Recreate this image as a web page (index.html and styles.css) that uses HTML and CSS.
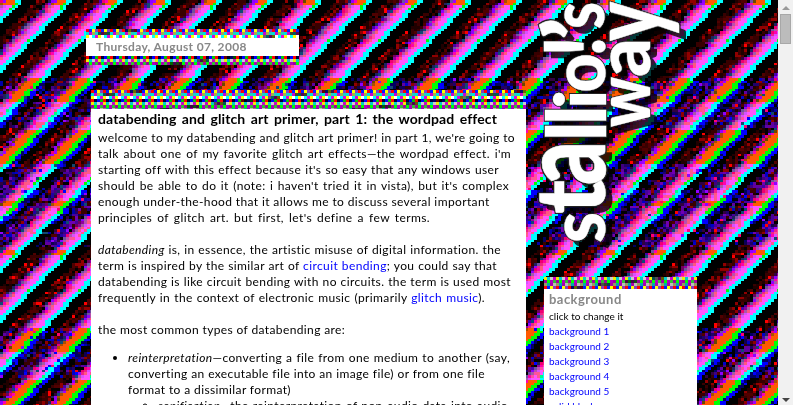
FILE: index.html
```html
<!DOCTYPE html>
<html lang="en">
<head>
<meta charset="utf-8">
<title>stallio!'s way</title>
<link rel="stylesheet" href="styles.css">
</head>
<body>
<canvas id="backdrop" class="backdrop" width="778" height="405"></canvas>
<div class="page">
  <div class="topline"></div>
  <main class="main">
    <section class="date">
      <canvas class="strip" width="213" height="9" data-start="0"></canvas>
      <h2>Thursday, August 07, 2008</h2>
      <canvas class="strip" width="213" height="9" data-start="3"></canvas>
    </section>
    <article class="post">
      <canvas class="strip" width="435" height="19" data-start="0"></canvas>
      <div class="post-body">
        <h3><span style="--w:399px">databending and glitch art primer, part 1: the wordpad effect</span></h3>
        <p>
          <span style="--w:417px">welcome to my databending and glitch art primer! in part 1, we're going to</span>
          <span style="--w:413px">talk about one of my favorite glitch art effects—the wordpad effect. i'm</span>
          <span style="--w:401px">starting off with this effect because it's so easy that any windows user</span>
          <span style="--w:411px">should be able to do it (note: i haven't tried it in vista), but it's complex</span>
          <span style="--w:388px">enough under-the-hood that it allows me to discuss several important</span>
          <span style="--w:332px">principles of glitch art. but first, let's define a few terms.</span>
        </p>
        <p>
          <span style="--w:403px"><i>databending</i> is, in essence, the artistic misuse of digital information. the</span>
          <span style="--w:399px">term is inspired by the similar art of <a href="#">circuit bending</a>; you could say that</span>
          <span style="--w:413px">databending is like circuit bending with no circuits. the term is used most</span>
          <span style="--w:387px">frequently in the context of electronic music (primarily <a href="#">glitch music</a>).</span>
        </p>
        <p><span style="--w:246px">the most common types of databending are:</span></p>
        <ul>
          <li>
            <span style="--w:382px"><i>reinterpretation</i>—converting a file from one medium to another (say,</span>
            <span style="--w:357px">converting an executable file into an image file) or from one file</span>
            <span style="--w:160px">format to a dissimilar format)</span>
            <ul><li><span style="--w:350px"><i>sonification</i>—the reinterpretation of non-audio data into audio</span></li></ul>
          </li>
        </ul>
      </div>
    </article>
  </main>
  <aside class="side">
    <svg class="logo" width="160" height="250" viewBox="534 0 160 250" role="img" aria-label="stallio!'s way">
      <defs>
        <g id="name">
          <text transform="translate(605 243) rotate(-90) scale(1 .88)" textLength="31" lengthAdjust="spacingAndGlyphs">s</text>
          <text transform="translate(605 214) rotate(-90) scale(1 1.1)" textLength="34" lengthAdjust="spacingAndGlyphs">t</text>
          <text transform="translate(605 185) rotate(-90) scale(1 1.36)" textLength="44" lengthAdjust="spacingAndGlyphs">a</text>
          <text transform="translate(605.5 141) rotate(-90) scale(1 .94)" textLength="19.5" lengthAdjust="spacingAndGlyphs">l</text>
          <text transform="translate(605.5 125) rotate(-90) scale(1 .94)" textLength="19.5" lengthAdjust="spacingAndGlyphs">l</text>
          <text transform="translate(605.5 109) rotate(-90) scale(1 .8)" textLength="19.5" lengthAdjust="spacingAndGlyphs">i</text>
          <text transform="translate(605 92.5) rotate(-90) scale(1 .85)" textLength="39" lengthAdjust="spacingAndGlyphs">o</text>
          <text transform="translate(605 57) rotate(-90) scale(1 .96)" textLength="21" lengthAdjust="spacingAndGlyphs">!</text>
          <text transform="translate(607 41) rotate(-90)" textLength="24" lengthAdjust="spacingAndGlyphs">’</text>
          <text transform="translate(604 29) rotate(-90) scale(1 .87)" textLength="27" lengthAdjust="spacingAndGlyphs">s</text>
          <text transform="translate(650 127) rotate(-90) scale(1 .87)" textLength="50" lengthAdjust="spacingAndGlyphs">w</text>
          <text transform="translate(650 77) rotate(-90) scale(1 .86)" textLength="39" lengthAdjust="spacingAndGlyphs">a</text>
          <text transform="translate(662 41) rotate(-90) scale(1 1.15)" textLength="39" lengthAdjust="spacingAndGlyphs">y</text>
        </g>
      </defs>
      <use href="#name" class="logo-shadow" x="7" y="7"/>
      <use href="#name" class="logo-edge"/>
      <use href="#name" class="logo-face"/>
    </svg>
    <section class="box">
      <canvas class="strip" width="153" height="12" data-start="4"></canvas>
      <div class="box-body">
        <h4>background</h4>
        <p>click to change it</p>
        <a href="#">background 1</a>
        <a href="#">background 2</a>
        <a href="#">background 3</a>
        <a href="#">background 4</a>
        <a href="#">background 5</a>
        <a href="#">solid black</a>
      </div>
    </section>
  </aside>
  <div class="scrollbar"><i class="up"></i><b class="thumb"></b><i class="down"></i></div>
</div>
<script src="backdrop.js"></script>
</body>
</html>
```
FILE: styles.css
```css
* { box-sizing: border-box; }
body { margin: 0; height: 405px; overflow: hidden; background: #000; font: 12px/16px Lato, "Open Sans", sans-serif; color: #000; }
canvas, svg { display: block; }
.backdrop { position: absolute; left: 0; top: 0; z-index: -1; }
.page { display: grid; grid-template-columns: 80px 454px 244px 15px; grid-template-rows: 1px 404px; height: 405px; overflow: hidden; }
.topline { grid-column: 2 / 4; width: 457px; background: #fff; }
.main { grid-column: 2; grid-row: 2; padding: 28px 0 0 6px; }
.date { width: 213px; }
.date h2 { margin: 0; height: 18px; padding-left: 10px; background: #fff; color: #888; font: bold 12px/18px Lato, sans-serif; letter-spacing: .33px; white-space: nowrap; }
.post { margin: 25px 0 0 5px; width: 435px; }
.post-body { height: 400px; padding: 1px 0 0 7px; background: #fff; }
.post-body span { display: block; width: var(--w); white-space: nowrap; text-align-last: justify; letter-spacing: .38px; }
.post-body h3 { margin: 0 0 3px; font: bold 14px/17px Lato, sans-serif; }
.post-body h3 span { letter-spacing: .1px; }
p { margin: 0 0 16px; }
a { color: #00f; text-decoration: none; }
.post-body ul { margin: -4px 0 0; padding-left: 30px; }
.post-body ul ul { margin: 0; }
.side { grid-column: 3; grid-row: 1 / 3; }
.logo text { font: 900 88px Lato, sans-serif; }
.logo-face { fill: #fff; stroke: #fff; stroke-width: .4; }
.logo-edge { fill: #222; stroke: #222; stroke-width: 2.6; }
.logo-shadow { fill: #000; opacity: .78; }
.box { width: 153px; margin: 27px 0 0 10px; }
.box-body { height: 130px; padding: 2px 5px; background: #fff; font-size: 10px; line-height: 15px; letter-spacing: .05px; }
.box-body h4 { margin: 0; font: bold 13px/17px Lato, sans-serif; color: #888; letter-spacing: .45px; }
.box-body p { margin: 1px 0 0; }
.box-body a { display: block; }
.scrollbar { grid-column: 4; grid-row: 1 / 3; display: flex; flex-direction: column; align-items: center; padding: 6px 0 3px; background: #f1f1f1; }
.scrollbar i { border: 4px solid transparent; width: 0; height: 0; border-top-width: 0; border-bottom: 4px solid #999; }
.scrollbar .down { margin-top: auto; border-bottom-width: 0; border-top: 4px solid #444; }
.thumb { width: 11px; height: 30px; margin-top: 4px; border: 1px solid #a8a8a8; background: #bcbcbc; }
```
FILE: backdrop.js
```js
let seed = 73;
function rnd() { seed = (seed * 1664525 + 1013904223) >>> 0; return seed / 4294967296; }
function pick(list) { return list[Math.floor(rnd() * list.length)]; }

const field = document.getElementById('backdrop').getContext('2d');
const CW = 3, CH = 250 / 96;
const between = (y, a, b) => y >= a && y < b;
for (let r = 0; r * CH < 405; r++) {
  const y = (r * CH) % 250;
  const green = between(y, 78, 101) || between(y, 130, 163) || between(y, 177, 183) || between(y, 196, 213) || between(y, 1, 10) || between(y, 38, 40);
  const orange = between(y, 78, 101) || between(y, 128, 163) || between(y, 198, 205) || between(y, 0, 4);
  const blue = between(y, 79, 168) || between(y, 188, 222);
  const noisy = between(y, 78, 126) || between(y, 164, 247);
  const purple = between(y, 168, 242);
  for (let c = 0; c < 260; c++) {
    const p = ((((c * CW + y - 65) % 50) + 50) % 50) / 3;
    let color = '#000';
    if (p < 1) color = green ? '#0f0' : (blue && rnd() < .25 ? '#00ff80' : '#0ff');
    else if (p < 2) color = green ? (blue ? '#0f0' : '#0ff') : '#0ff';
    else if (p < 4) color = blue ? (rnd() < .75 ? '#00f' : '#000060') : '#000';
    else if (p < 6.5) color = noisy && rnd() < .5 ? pick(['#000060', '#000', '#0000a8', '#300040']) : '#000';
    else if (p < 10.5) {
      color = pick(['#380000', '#380000', '#500000', '#000', '#900000', '#200000']);
      if (rnd() < .045) color = '#f00';
      if (noisy && rnd() < .5) color = pick(['#20006a', '#400080', '#0000c8', '#6000a0', '#100050']);
      if (purple && rnd() < .35) color = pick(['#48009a', '#2200a0', '#7000b0']);
    } else if (p < 11.5) color = pick(['#300040', '#700060', '#000', '#4800a8', '#202060']);
    else if (p < 12.5) color = pick(['#9000a0', '#f00070', '#7050a0', '#9000ff', '#104878']);
    else if (p < 13.5) color = orange ? pick(['#a85000', '#ff00b0', '#6a4800', '#a000ff']) : pick(['#b850b0', '#f0208a', '#a858a8', '#ff00b0']);
    else if (p < 14.5) color = orange ? '#ff5a00' : pick(['#ff50a0', '#ff5880', '#d850ff']);
    else color = orange ? '#ff5a00' : (noisy && rnd() < .3 ? '#ff5890' : '#ff55ff');
    if (noisy && rnd() < .035) color = pick(['#0000ff', '#9000ff', '#104870', '#ff0070']);
    field.fillStyle = color;
    field.fillRect(c * CW, Math.round(r * CH), CW, 3);
  }
}

const rows = [
  ['#f00', '#0020ff', '#ff0', '#8040c0'],
  ['#0dd', '#c0c', '#a9a950', '#20d0c0'],
  ['#ff0', '#fff', '#0ff', '#e000e0'],
  ['#f00', '#003', '#00f', '#0c0'],
  ['#ee0', '#0cc', '#ccc', '#c0c'],
  ['#a000a0', '#0f0', '#b000c0', '#30c030'],
  ['#999960', '#0aa', '#a0a', '#bbb']
];
document.querySelectorAll('.strip').forEach(cv => {
  const g = cv.getContext('2d'), start = +cv.dataset.start;
  for (let y = 0, r = start; y < cv.height; y += 3, r++) {
    for (let x = 0, i = 0; x < cv.width; x += 3, i++) {
      g.fillStyle = rows[r % 7][(i + Math.floor(i / 23)) % 4];
      g.fillRect(x, y, 3, 3);
      const smudge = (x + y * 9 + start * 31) % 191;
      if (smudge > 38 && smudge < 51) {
        g.fillStyle = 'rgba(0,0,0,.6)';
        g.fillRect(x, y, 3, 3);
      }
    }
  }
});
```
